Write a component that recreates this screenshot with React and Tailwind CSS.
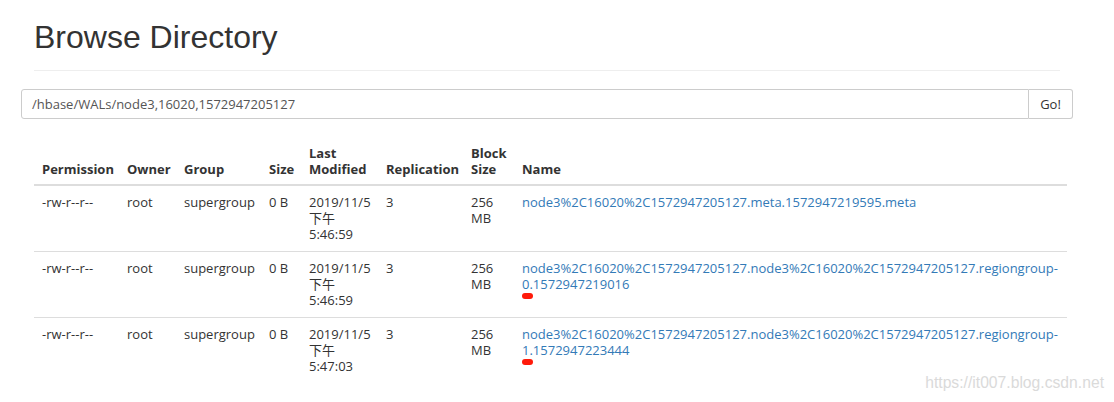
import React from 'react';

const rows = [
  {
    perm: '-rw-r--r--',
    owner: 'root',
    group: 'supergroup',
    size: '0 B',
    date: '2019/11/5',
    time: '5:46:59',
    repl: '3',
    block: '256',
    name: ['node3%2C16020%2C1572947205127.meta.1572947219595.meta'],
  },
  {
    perm: '-rw-r--r--',
    owner: 'root',
    group: 'supergroup',
    size: '0 B',
    date: '2019/11/5',
    time: '5:46:59',
    repl: '3',
    block: '256',
    name: ['node3%2C16020%2C1572947205127.node3%2C16020%2C1572947205127.regiongroup-', '0', '.1572947219016'],
  },
  {
    perm: '-rw-r--r--',
    owner: 'root',
    group: 'supergroup',
    size: '0 B',
    date: '2019/11/5',
    time: '5:47:03',
    repl: '3',
    block: '256',
    name: ['node3%2C16020%2C1572947205127.node3%2C16020%2C1572947205127.regiongroup-', '1', '.1572947223444'],
  },
];

const FileName = ({ parts }) => {
  if (parts.length === 1) return <a href="#" className="text-[#337ab7]">{parts[0]}</a>;
  return (
    <a href="#" className="text-[#337ab7]">
      {parts[0]}
      <br />
      {/* red marker drawn under the first char */}
      <span className="relative">
        {parts[1]}
        <span className="absolute left-0 top-full w-[11px] h-[6px] rounded-full bg-[#ff1a0a]" />
      </span>
      {parts[2]}
    </a>
  );
};

const App = () => {
  return (
    <div className="relative w-full h-[402px] overflow-hidden bg-white text-[#333] text-[13px] leading-[16.33px] font-['Open_Sans','Noto_Sans_CJK_SC',sans-serif]">
      {/* Page header */}
      <div className="ml-[34px] w-[1026px] pt-[20px]">
        <h1 className="text-[32px] leading-[35px] font-normal text-[#333] font-['Liberation_Sans',Arial,sans-serif]">
          Browse Directory
        </h1>
        <div className="mt-[15px] border-t border-[#eee]" />
      </div>

      {/* Path input */}
      <div className="ml-[21px] mt-[18px] w-[1052px] h-[30px] flex">
        <div className="flex-1 flex items-center px-[10px] border border-[#ccc] rounded-l-[3px] text-[#555]">
          /hbase/WALs/node3,16020,1572947205127
        </div>
        <button className="w-[44px] border border-l-0 border-[#ccc] rounded-r-[3px] bg-white text-[#333]">
          Go!
        </button>
      </div>

      {/* Listing */}
      <table className="mt-[16px] ml-[34px] w-[1033px] table-fixed border-collapse">
        <colgroup>
          <col className="w-[85px]" />
          <col className="w-[57px]" />
          <col className="w-[85px]" />
          <col className="w-[40px]" />
          <col className="w-[77px]" />
          <col className="w-[85px]" />
          <col className="w-[51px]" />
          <col />
        </colgroup>
        <thead>
          <tr className="text-left align-bottom font-bold">
            <th className="px-[8px] pt-[10px] pb-[6px] border-b-2 border-[#ddd]">Permission</th>
            <th className="px-[8px] pt-[10px] pb-[6px] border-b-2 border-[#ddd]">Owner</th>
            <th className="px-[8px] pt-[10px] pb-[6px] border-b-2 border-[#ddd]">Group</th>
            <th className="px-[8px] pt-[10px] pb-[6px] border-b-2 border-[#ddd]">Size</th>
            <th className="px-[8px] pt-[10px] pb-[6px] border-b-2 border-[#ddd]">Last<br />Modified</th>
            <th className="px-[8px] pt-[10px] pb-[6px] border-b-2 border-[#ddd]">Replication</th>
            <th className="px-[8px] pt-[10px] pb-[6px] border-b-2 border-[#ddd]">Block<br />Size</th>
            <th className="px-[8px] pt-[10px] pb-[6px] border-b-2 border-[#ddd]">Name</th>
          </tr>
        </thead>
        <tbody>
          {rows.map((r, i) => (
            <tr key={i} className="align-top">
              <td className="px-[8px] py-[8px] border-t border-[#ddd] whitespace-nowrap">{r.perm}</td>
              <td className="px-[8px] py-[8px] border-t border-[#ddd]">{r.owner}</td>
              <td className="px-[8px] py-[8px] border-t border-[#ddd]">{r.group}</td>
              <td className="px-[8px] py-[8px] border-t border-[#ddd] whitespace-nowrap">{r.size}</td>
              <td className="px-[8px] py-[8px] border-t border-[#ddd] whitespace-nowrap">
                {r.date}<br />下午<br />{r.time}
              </td>
              <td className="px-[8px] py-[8px] border-t border-[#ddd]">{r.repl}</td>
              <td className="px-[8px] py-[8px] border-t border-[#ddd]">{r.block}<br />MB</td>
              <td className="px-[8px] py-[8px] border-t border-[#ddd] whitespace-nowrap">
                <FileName parts={r.name} />
              </td>
            </tr>
          ))}
        </tbody>
      </table>

      {/* watermark */}
      <div className="absolute right-[10px] bottom-[10px] text-[15.7px] leading-[18px] text-[#dadada] font-['Liberation_Sans',Arial,sans-serif]">
        https://it007.blog.csdn.net
      </div>
    </div>
  );
};

export default App;
